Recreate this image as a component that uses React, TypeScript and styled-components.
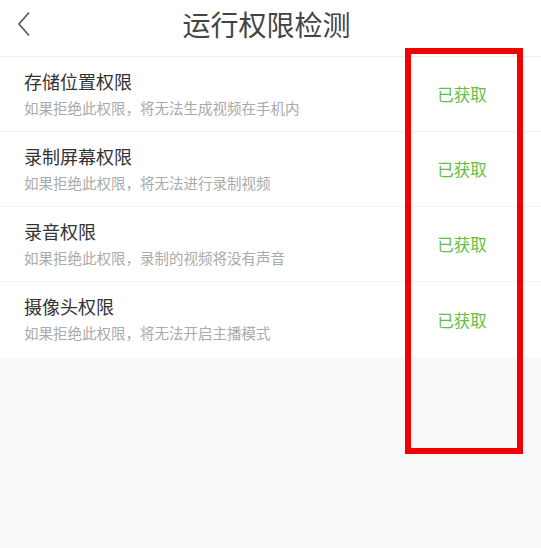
import styled, { createGlobalStyle } from "styled-components";

const GlobalStyle = createGlobalStyle`
  html, body {
    margin: 0;
    padding: 0;
    background: #f9f9fb;
  }
  body {
    font-family: "Noto Sans CJK SC", "Noto Sans", sans-serif;
  }
`;

const Page = styled.div`
  position: relative;
  width: 541px;
  height: 548px;
  background: #f9f9fb;
  overflow: hidden;
`;

const Header = styled.header`
  position: relative;
  display: flex;
  align-items: flex-start;
  justify-content: center;
  height: 56px;
  box-sizing: content-box;
  padding-right: 8px;
  background: #fff;
  border-bottom: 1px solid #efefef;
`;

const BackButton = styled.button`
  position: absolute;
  left: 12px;
  top: 8px;
  display: flex;
  align-items: center;
  justify-content: center;
  width: 24px;
  height: 32px;
  padding: 0;
  border: none;
  background: none;
`;

const Title = styled.h1`
  margin: 9px 0 0;
  font-size: 28px;
  font-weight: 400;
  color: #444;
  line-height: 30px;
`;

const List = styled.ul`
  margin: 0;
  padding: 0;
  list-style: none;
  background: #fff;
`;

const Row = styled.li<{ $last?: boolean }>`
  display: flex;
  align-items: center;
  height: 75px;
  box-sizing: border-box;
  padding-left: 24px;
  border-bottom: ${(p) => (p.$last ? "none" : "1px solid #f0f0f0")};
`;

const Info = styled.div`
  flex: 1;
  display: flex;
  flex-direction: column;
  gap: 5px;
  margin-top: -2px;
`;

const Name = styled.div`
  font-size: 18px;
  line-height: 24px;
  color: #333;
`;

const Desc = styled.div`
  font-size: 14.5px;
  line-height: 20px;
  color: #aaa;
`;

const Status = styled.div`
  width: 118px;
  margin-right: 20px;
  text-align: center;
  font-size: 16.5px;
  color: #62c043;
`;

const Highlight = styled.div`
  position: absolute;
  left: 405px;
  top: 48px;
  width: 118px;
  height: 406px;
  box-sizing: border-box;
  border: 6px solid #f50000;
  pointer-events: none;
`;

const permissions = [
  { name: "存储位置权限", desc: "如果拒绝此权限，将无法生成视频在手机内" },
  { name: "录制屏幕权限", desc: "如果拒绝此权限，将无法进行录制视频" },
  { name: "录音权限", desc: "如果拒绝此权限，录制的视频将没有声音" },
  { name: "摄像头权限", desc: "如果拒绝此权限，将无法开启主播模式" },
];

const App = () => {
  return (
    <Page>
      <GlobalStyle />
      <Header>
        <BackButton aria-label="返回">
          <svg width="16" height="26" viewBox="0 0 16 26">
            <polyline
              points="13,1.5 3,13 13,24.5"
              fill="none"
              stroke="#555"
              strokeWidth="1.6"
            />
          </svg>
        </BackButton>
        <Title>运行权限检测</Title>
      </Header>
      <List>
        {permissions.map((p, i) => (
          <Row key={p.name} $last={i === permissions.length - 1}>
            <Info>
              <Name>{p.name}</Name>
              <Desc>{p.desc}</Desc>
            </Info>
            <Status>已获取</Status>
          </Row>
        ))}
      </List>
      <Highlight />
    </Page>
  );
};

export default App;
